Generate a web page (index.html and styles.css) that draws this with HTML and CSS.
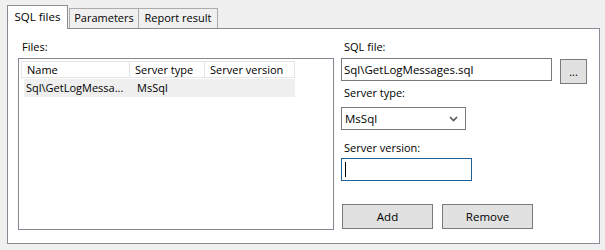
FILE: index.html
```html
<!DOCTYPE html>
<html lang="en">
<head>
  <meta charset="UTF-8">
  <title>SQL files</title>
  <link rel="stylesheet" href="styles.css">
</head>
<body>
  <!-- Tab strip -->
  <div class="tabs">
    <div class="tab active">SQL files</div>
    <div class="tab tab-params">Parameters</div>
    <div class="tab tab-report">Report result</div>
  </div>

  <!-- Tab page -->
  <div class="panel">
    <div class="files">
      <div class="label">Files:</div>
      <div class="listview">
        <div class="lv-header">
          <div class="col col-name">Name</div>
          <div class="col col-type">Server type</div>
          <div class="col col-version">Server version</div>
        </div>
        <div class="lv-row">
          <div class="col col-name">Sql\GetLogMessa...</div>
          <div class="col col-type">MsSql</div>
          <div class="col col-version"></div>
        </div>
      </div>
    </div>

    <div class="details">
      <div class="label">SQL file:</div>
      <div class="file-row">
        <div class="textbox textbox-file">Sql\GetLogMessages.sql</div>
        <button class="btn btn-browse">...</button>
      </div>

      <div class="label label-type">Server type:</div>
      <div class="combo">
        <span>MsSql</span>
        <svg class="chevron" width="9" height="6" viewBox="0 0 9 6">
          <path d="M1 1 L4.5 4.5 L8 1" fill="none" stroke="#555" stroke-width="1.6"/>
        </svg>
      </div>

      <div class="label label-version">Server version:</div>
      <div class="textbox textbox-version focused"><span class="caret"></span></div>

      <div class="actions">
        <button class="btn">Add</button>
        <button class="btn">Remove</button>
      </div>
    </div>
  </div>
</body>
</html>
```

FILE: styles.css
```css
body {
  margin: 0;
  background-color: #f0f0f0;
  font-family: "Open Sans", "Noto Sans", sans-serif;
  font-size: 11px;
  color: #000;
  width: 605px;
  height: 250px;
  overflow: hidden;
}

/* Tab strip */
.tabs {
  display: flex;
  align-items: flex-end;
  height: 23px;
  padding: 5px 0 0 7px;
}

.tab {
  box-sizing: border-box;
  height: 20px;
  line-height: 18px;
  text-align: center;
  border: 1px solid #acacac;
  border-bottom: none;
  background-color: #f0f0f0;
}

.tab.active {
  position: relative;
  z-index: 1;
  width: 61px;
  height: 24px;
  line-height: 22px;
  margin-bottom: -1px;
  background-color: #fff;
  border-color: #898c95;
  font-size: 11.5px;
}

.tab-params {
  width: 69px;
  margin-left: 1px;
  border-right: none;
}

.tab-report {
  width: 80px;
}

/* Tab page */
.panel {
  box-sizing: border-box;
  display: flex;
  width: 593px;
  height: 216px;
  margin-left: 7px;
  padding-top: 10px;
  background-color: #fff;
  border: 1px solid #898c95;
}

.label {
  height: 16px;
  line-height: 16px;
  padding-left: 3px;
}

/* Files list */
.files {
  width: 316px;
  margin-left: 10px;
}

.files .label {
  padding-left: 4px;
}

.listview {
  box-sizing: border-box;
  height: 172px;
  margin-top: 3px;
  padding: 2px 0 0 2px;
  border: 1px solid #828790;
}

.lv-header,
.lv-row {
  display: flex;
}

.lv-header .col {
  box-sizing: border-box;
  height: 17px;
  line-height: 15px;
  padding-left: 5px;
  border: 1px solid #e5e5e5;
  border-left: none;
}

.lv-header .col-name {
  border-left: 1px solid #e5e5e5;
}

.lv-row {
  margin: 1px 0 0 3px;
  width: 271px;
  background-color: #efefef;
}

.lv-row .col {
  height: 18px;
  line-height: 18px;
  padding-left: 2px;
  box-sizing: border-box;
}

.col-name { width: 109px; }
.col-type { width: 75px; }
.col-version { width: 90px; }

.lv-row .col-name { width: 109px; }
.lv-row .col-type { width: 75px; padding-left: 4px; }
.lv-row .col-version { width: 87px; }

/* Details */
.details {
  margin-left: 7px;
  width: 250px;
}

.file-row {
  display: flex;
  align-items: flex-start;
  margin-top: 3px;
}

.textbox {
  box-sizing: border-box;
  height: 23px;
  line-height: 21px;
  padding-left: 2px;
  border: 1px solid #7a7a7a;
  background-color: #fff;
  display: flex;
  align-items: center;
}

.textbox-file {
  width: 211px;
  font-size: 11.5px;
}

.textbox-version {
  width: 131px;
}

.textbox.focused {
  border-color: #1f5f95;
}

.caret {
  width: 1px;
  height: 15px;
  margin-left: 1px;
  background-color: #000;
}

.btn {
  box-sizing: border-box;
  height: 25px;
  padding: 0;
  font-family: inherit;
  font-size: 11.5px;
  color: #000;
  background-color: #e1e1e1;
  border: 1px solid #7a7a7a;
  border-radius: 0;
}

.btn-browse {
  width: 27px;
  margin: 1px 0 0 8px;
  font-size: 11px;
  line-height: 18px;
}

.label-type {
  margin-top: 1px;
}

.combo {
  box-sizing: border-box;
  display: flex;
  align-items: center;
  justify-content: space-between;
  width: 125px;
  height: 23px;
  margin-top: 6px;
  padding: 0 7px 0 3px;
  border: 1px solid #7a7a7a;
  font-size: 11.5px;
}

.label-version {
  margin-top: 10px;
}

.textbox-version {
  margin-top: 2px;
}

.actions {
  display: flex;
  gap: 9px;
  margin: 23px 0 0 1px;
}

.actions .btn {
  width: 91px;
}
```
